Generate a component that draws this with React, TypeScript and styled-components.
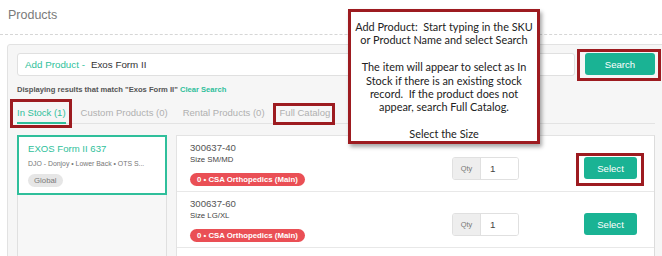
import React from "react";
import styled, { createGlobalStyle } from "styled-components";

const Global = createGlobalStyle`
  html, body { margin: 0; padding: 0; background: #fff; overflow: hidden; }
  body { font-family: "Liberation Sans", Arial, sans-serif; }
`;

const Page = styled.div`
  position: relative;
  width: 662px;
  height: 256px;
  overflow: hidden;
`;

const Header = styled.h1`
  margin: 0;
  height: 35px;
  box-sizing: border-box;
  padding: 8px 0 0 8px;
  font-size: 12.5px;
  line-height: 14px;
  font-weight: normal;
  color: #7a7a7a;
  border-bottom: 1px dashed #d6d6d6;
`;

const Panel = styled.section`
  margin: 9px 0 0 7px;
  width: 658px;
  height: 240px;
  box-sizing: border-box;
  padding: 8px 9px 0 9px;
  background: #f6f6f6;
  border: 1px solid #e2e2e2;
  border-radius: 3px;
`;

const SearchRow = styled.div`
  display: flex;
  gap: 10px;
`;

const SearchField = styled.div`
  flex: 1;
  height: 23px;
  box-sizing: border-box;
  display: flex;
  align-items: center;
  gap: 6px;
  padding-left: 7px;
  background: #fff;
  border: 1px solid #e0e0e0;
  border-radius: 3px;
  font-size: 9.8px;
`;

const FieldLabel = styled.span`
  color: #2fbf9b;
`;

const FieldValue = styled.span`
  color: #333;
`;

const Button = styled.button<{ $w: number; $h: number }>`
  width: ${(p) => p.$w}px;
  height: ${(p) => p.$h}px;
  padding: 0;
  border: none;
  border-radius: 3px;
  background: #1ab394;
  color: #fff;
  font-family: "Liberation Sans", Arial, sans-serif;
  font-size: 9.6px;
  cursor: pointer;
`;

const ResultLine = styled.div`
  margin-top: 9px;
  font-size: 7.6px;
  line-height: 10px;
  font-weight: bold;
  color: #555;
`;

const ClearLink = styled.span`
  color: #2fbf9b;
`;

const TabBar = styled.div`
  margin-top: 6px;
  display: flex;
  gap: 15px;
  border-bottom: 1px solid #e3e3e3;
`;

const Tab = styled.div<{ $active?: boolean }>`
  padding: 6px 0 3px;
  font-size: 9.5px;
  line-height: 12px;
  color: ${(p) => (p.$active ? "#2fbf9b" : "#b0b0b0")};
  border-bottom: 2px solid ${(p) => (p.$active ? "#2fbf9b" : "transparent")};
  margin-bottom: -1px;
`;

const Content = styled.div`
  margin-top: 11px;
  display: grid;
  grid-template-columns: 150px 1fr;
  gap: 9px;
  align-items: start;
`;

const LeftCol = styled.div`
  height: 130px;
  box-sizing: border-box;
  border: 1px solid #e0e0e0;
  border-top: none;
  background: #f7f7f7;
`;

const Card = styled.div`
  margin: 0 -1px;
  padding: 6px 9px 6px 9px;
  background: #fff;
  border: 2px solid #2fbf9b;
`;

const CardTitle = styled.div`
  font-size: 9.6px;
  line-height: 11px;
  color: #2fbf9b;
`;

const CardMeta = styled.div`
  margin-top: 5px;
  font-size: 6.9px;
  line-height: 9px;
  color: #777;
  white-space: nowrap;
`;

const Pill = styled.span<{ $tone: "grey" | "red" }>`
  display: inline-block;
  height: 13px;
  line-height: 13px;
  padding: 0 ${(p) => (p.$tone === "red" ? 7 : 6)}px;
  border-radius: 7px;
  font-size: 7.8px;
  font-weight: ${(p) => (p.$tone === "red" ? "bold" : "normal")};
  background: ${(p) => (p.$tone === "red" ? "#ea4f55" : "#e6e6e6")};
  color: ${(p) => (p.$tone === "red" ? "#fff" : "#7a7a7a")};
`;

const CardPill = styled.div`
  margin-top: 1px;
`;

const List = styled.div`
  background: #fff;
  border: 1px solid #e3e3e3;
  border-right: 1px solid #dcdcdc;
  height: 130px;
  box-sizing: border-box;
  overflow: hidden;
`;

const Row = styled.div`
  display: flex;
  align-items: flex-end;
  padding: 6px 17px 10px 13px;
  border-bottom: 1px solid #e8e8e8;
`;

const RowInfo = styled.div`
  flex: 1;
`;

const Sku = styled.div`
  font-size: 9.6px;
  line-height: 11px;
  color: #555;
`;

const Size = styled.div`
  margin-top: 2px;
  font-size: 7.8px;
  line-height: 9px;
  color: #444;
`;

const RowPill = styled.div`
  margin-top: 4px;
  height: 13px;
`;

const QtyGroup = styled.div`
  display: flex;
  height: 23px;
  margin-bottom: 1px;
  box-sizing: border-box;
  border: 1px solid #e0e0e0;
  border-radius: 3px;
  overflow: hidden;
`;

const QtyAddon = styled.div`
  width: 27px;
  display: flex;
  align-items: center;
  justify-content: center;
  background: #eee;
  border-right: 1px solid #e0e0e0;
  font-size: 7.4px;
  color: #777;
`;

const QtyInput = styled.div`
  width: 37px;
  display: flex;
  align-items: center;
  padding-left: 9px;
  box-sizing: border-box;
  font-size: 9.8px;
  color: #444;
  background: #fff;
`;

const SelectWrap = styled.div`
  margin-left: 65px;
  margin-bottom: 2px;
  display: flex;
`;

const Mark = styled.div<{ $x: number; $y: number; $w: number; $h: number }>`
  position: absolute;
  left: ${(p) => p.$x}px;
  top: ${(p) => p.$y}px;
  width: ${(p) => p.$w}px;
  height: ${(p) => p.$h}px;
  box-sizing: border-box;
  border: 3px solid #9d1b20;
  pointer-events: none;
`;

const Callout = styled.div`
  position: absolute;
  left: 348px;
  top: 9px;
  width: 192px;
  height: 135px;
  box-sizing: border-box;
  padding-top: 8px;
  background: #fff;
  border: 3px solid #9d1b20;
  box-shadow: 2px 3px 4px rgba(0, 0, 0, 0.35);
  font-family: Lato, "Noto Sans", sans-serif;
  font-size: 10.9px;
  line-height: 13.4px;
  color: #222;
  text-align: center;
  white-space: pre;
`;

const CalloutPara = styled.p`
  margin: 0 0 13.4px;
`;

const rows = [
  { sku: "300637-40", size: "Size SM/MD" },
  { sku: "300637-60", size: "Size LG/XL" },
];

export default function App() {
  return (
    <Page>
      <Global />
      <Header>Products</Header>
      <Panel>
        <SearchRow>
          <SearchField>
            <FieldLabel>Add Product -</FieldLabel>
            <FieldValue>Exos Form II</FieldValue>
          </SearchField>
          <Button $w={70} $h={22}>Search</Button>
        </SearchRow>
        <ResultLine>
          Displaying results that match "Exos Form II" <ClearLink>Clear Search</ClearLink>
        </ResultLine>
        <TabBar>
          <Tab $active>In Stock (1)</Tab>
          <Tab>Custom Products (0)</Tab>
          <Tab>Rental Products (0)</Tab>
          <Tab>Full Catalog</Tab>
        </TabBar>
        <Content>
          <LeftCol>
            <Card>
              <CardTitle>EXOS Form II 637</CardTitle>
              <CardMeta>DJO - Donjoy • Lower Back • OTS S...</CardMeta>
              <CardPill>
                <Pill $tone="grey">Global</Pill>
              </CardPill>
            </Card>
          </LeftCol>
          <List>
            {rows.map((r) => (
              <Row key={r.sku}>
                <RowInfo>
                  <Sku>{r.sku}</Sku>
                  <Size>{r.size}</Size>
                  <RowPill>
                    <Pill $tone="red">0 • CSA Orthopedics (Main)</Pill>
                  </RowPill>
                </RowInfo>
                <QtyGroup>
                  <QtyAddon>Qty</QtyAddon>
                  <QtyInput>1</QtyInput>
                </QtyGroup>
                <SelectWrap>
                  <Button $w={53} $h={22}>Select</Button>
                </SelectWrap>
              </Row>
            ))}
          </List>
        </Content>
      </Panel>

      <Mark $x={10} $y={99} $w={62} $h={29} />
      <Mark $x={273} $y={103} $w={62} $h={22} />
      <Mark $x={577} $y={49} $w={84} $h={32} />
      <Mark $x={576} $y={153} $w={68} $h={33} />

      <Callout>
        <CalloutPara>{"Add Product:  Start typing in the SKU\nor Product Name and select Search"}</CalloutPara>
        <CalloutPara>
          {"The item will appear to select as In\nStock if there is an existing stock\nrecord.  If the product does not\nappear, search Full Catalog."}
        </CalloutPara>
        <CalloutPara>Select the Size</CalloutPara>
      </Callout>
    </Page>
  );
}
